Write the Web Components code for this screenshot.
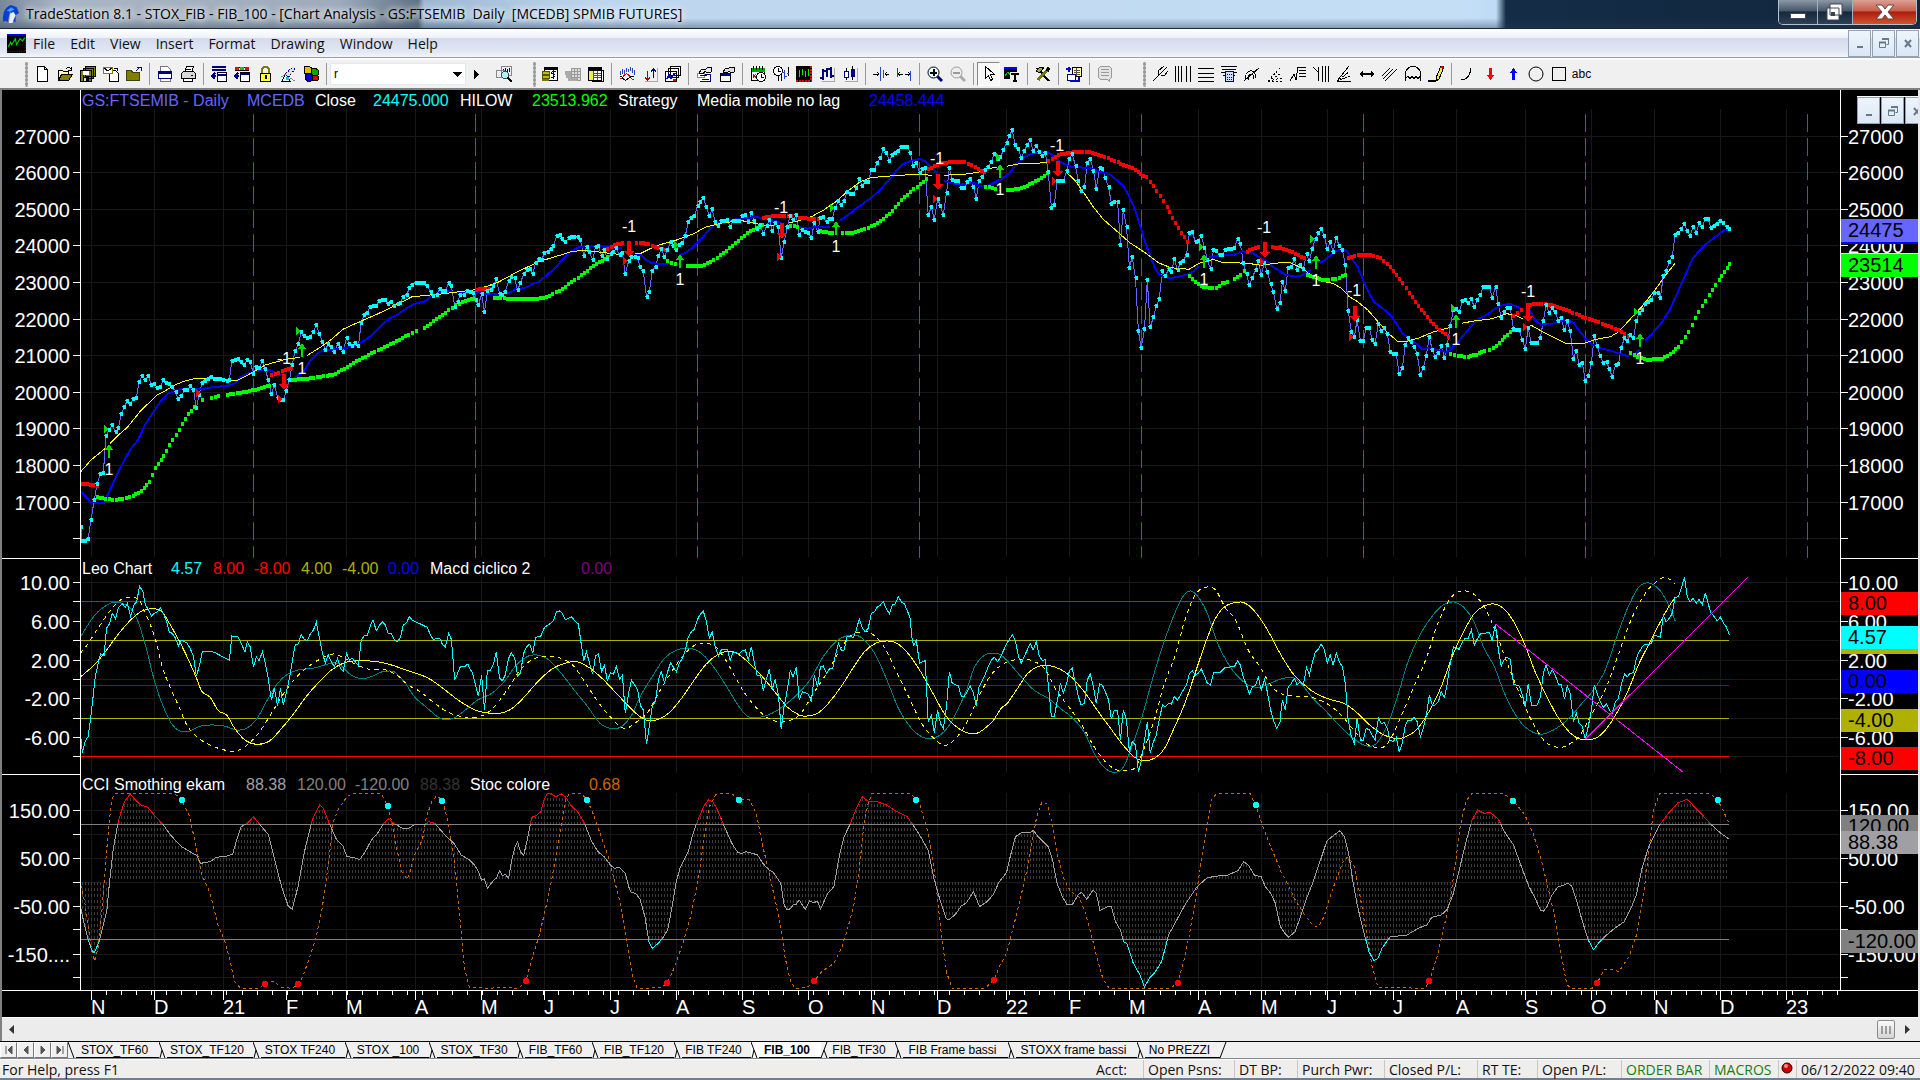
<!DOCTYPE html>
<html lang="en">
<head>
<meta charset="utf-8">
<title>TradeStation 8.1</title>
<style>
  html, body {
    height: 100%;
    margin: 0;
    background: #000;
  }
</style>
</head>
<body>
<trade-window></trade-window>

<script>
// ---------- icons (16 x 16) ----------

const ICONS = {
  app: '<path d="M2 15C1 8 3 2 9 0l5 2 2 5-3 2v6l-3-1 1-6-3-2-2 9-2-1z" fill="#0a3fd0"/><path d="M5 5l4-3 3 2-4 2z" fill="#39a0ff"/><path d="M7 16l1-8 3-2 2 3-3 7z" fill="#e9ecff"/>',
  chart: '<rect width="16" height="16" fill="#000"/><path d="M0 .5h16" stroke="#00f" stroke-width="2"/><path d="M1 11l2-4 1 2 3-5 1 5 3-5 2 2 2-3" fill="none" stroke="#0c0"/><path d="M0 14.500h16M15.500 3v12" stroke="#900" stroke-dasharray="1 1"/>',
  page: '<path d="M3.500 .5h7l3 3v12h-10zM10.500 .5v3h3" fill="#fff" stroke="#000"/>',
  open: '<path d="M1.500 14.500v-10h4l1 1h5v3" fill="#ffffa0" stroke="#000"/><path d="M1.500 14.500l3-6h11l-4 6z" fill="#808000" stroke="#000"/><path d="M9 3c2-2 3-2 5 0M14 1v3h-3" fill="none" stroke="#000"/>',
  saveAll: '<path d="M5.500 .5h10v10h-10zM3.500 2.500h10v10h-10zM.5 4.500h11v11h-11z" fill="#808000" stroke="#000"/><path d="M3 5h6v4H3z" fill="#fff"/><path d="M3 11h6v4H3z" fill="#000"/><path d="M4 12h2v3H4z" fill="#ddd"/>',
  mail: '<path d="M6.500 4.500h6l3 3v8h-9z" fill="#fff" stroke="#000"/><path d="M.5 1.500h9v6h-9z" fill="#fff" stroke="#808000"/><path d="M1 2l4 3 4-3" fill="none" stroke="#000"/><path d="M11 2h3v3" fill="none" stroke="#000"/>',
  folder: '<path d="M.5 14.500v-10h5l1 2h7v8z" fill="#808000" stroke="#404000"/><path d="M10 5l4-4M11 1h4v4" fill="none" stroke="#000080"/>',
  pageSetup: '<path d="M3.500 .5h7l3 3v12h-10z" fill="#fff" stroke="#777"/><path d="M1.500 5.500h13v7h-13z" fill="#fff" stroke="#000080"/><path d="M1 5h14v3H1z" fill="#000080"/>',
  print: '<path d="M4.500 6.500l2-6h7l-2 6" fill="#fff" stroke="#000"/><path d="M1.500 7.500l2-2h10l2 2v5h-14z" fill="#d8d8d8" stroke="#000"/><path d="M3 12.500h9v3H3zM6 3h5M5 5h5M11 9h2" fill="#fff" stroke="#000"/>',
  insert: '<path d="M1 1h14M1 3.500h14" stroke="#000080" stroke-width="2"/><path d="M6.500 6.500h9v9h-9z" fill="#fff" stroke="#000"/><path d="M6 9h9M5 10H1M4 7l-3 3 3 3" fill="none" stroke="#000080" stroke-width="2"/>',
  insertColor: '<path d="M1 1h14M1 4h14" stroke="#000" /><path d="M1 1h4v3H1z" fill="#f00"/><path d="M6 1h4v3H6z" fill="#0c0"/><path d="M11 1h4v3h-4z" fill="#f00"/><path d="M6.500 6.500h9v9h-9z" fill="#fff" stroke="#000"/><path d="M6 8h9M5 10H1M4 7l-3 3 3 3" fill="none" stroke="#000080" stroke-width="2"/>',
  lock: '<path d="M5 8V4c0-4 7-4 7 0v4" fill="none" stroke="#808000" stroke-width="2"/><path d="M3.500 7.500h10v8h-10z" fill="#ff4" stroke="#000"/><path d="M8 9h2v4H8z" fill="#000"/>',
  satellite: '<path d="M2 15l4-8 4 8z" fill="none" stroke="#000"/><path d="M5 8l8-7 2 2-6 8z" fill="#ddd" stroke="#000080" stroke-dasharray="1 1"/><path d="M1 11l5-3M10 12l5 3" stroke="#888"/><path d="M6 11h3v3H6z" fill="#0cc"/>',
  cubes: '<path d="M1 1l4-1 4 2v5l-4 2-4-2z" fill="#e0c000" stroke="#000"/><path d="M8 3l4-1 3 2v5l-4 1-3-2z" fill="#0a0" stroke="#000"/><path d="M2 8l4-1 4 2v5l-4 2-4-3z" fill="#00c" stroke="#000"/><path d="M9 10l3-1 3 1v4l-3 1-3-1z" fill="#d00" stroke="#000"/>',
  find: '<path d="M5.500 .5h10v9h-10zM.5 4.500h8v7h-8z" fill="#eee" stroke="#888"/><path d="M7 3h1M9 2v4M11 3v3M13 2v4" stroke="#000080"/><circle cx="9" cy="9" r="3.500" fill="#a6f4f4" stroke="#446"/><path d="M11.500 11.500l4 4" stroke="#000" stroke-width="2"/>',
  account: '<path d="M2.500 1.500h13v13h-13z" fill="#fff" stroke="#000"/><path d="M2 1h14v3H2z" fill="#000"/><ellipse cx="4" cy="7" rx="4" ry="2" fill="#bb0" stroke="#550"/><ellipse cx="4" cy="11" rx="4" ry="2" fill="#bb0" stroke="#550"/><path d="M0 14h7" stroke="#770" stroke-width="2"/><path d="M14 6c-4-2-6 2-3 2s3 4-2 3M11.500 4v9" fill="none" stroke="#000080"/>',
  trackOff: '<path d="M6.500 2.500h9v12h-9zM6 5.500h10M9 3v11M12 3v11M6 8.500h10M6 11.500h10" fill="#ddd" stroke="#999"/><path d="M0 5h6v7H1zM3 12h9v3H3z" fill="#aaa"/>',
  quote: '<path d="M.5 1.500h13v13H.5zM13 4h2v11H4" fill="#fff" stroke="#000"/><path d="M1 2h12v3H1z" fill="#000"/><path d="M1 5h4v9H1z" fill="#ee5"/><path d="M5 5v9M9 5v9M6 7h7M6 9h7M6 11h7" stroke="#554"/>',
  analysis: '<path d="M1 5v4M3 3v5M5 4v4M7 2v4M9 3v3M11 1v4M13 2v5M15 4v5" stroke="#24c"/><path d="M1 13c3 0 4-6 7-5s3 5 7 6" fill="none" stroke="#d00"/><path d="M1 10c3 0 3 5 6 4s4-5 8-3" fill="none" stroke="#000"/>',
  upDown: '<path d="M5.500 5v9M3 11.500l2.500 2.500L8 11.500" fill="none" stroke="#a00"/><path d="M11.500 12V3M9 5.500L11.500 3 14 5.500" fill="none" stroke="#000080"/><path d="M3 15.500h12.500V2" fill="none" stroke="#aaa"/>',
  windows: '<path d="M5.500 .5h10v9h-10zM3.500 2.500h10v9h-10zM.5 5.500h11v10H.5z" fill="#fff" stroke="#000"/><path d="M2 13l2-4 2 3 4-5" fill="none" stroke="#00c" stroke-width="2"/><path d="M8 14h3" stroke="#c00" stroke-width="2"/>',
  handPage: '<path d="M6.500 8.500h8v7h-11" fill="#fff" stroke="#000080"/><path d="M1.500 7.500h7v4h-7z" fill="#fff" stroke="#888"/><path d="M3 7l3-4h4l2-2h3v5l-4 1-2-2-2 3z" fill="#e8e8e8" stroke="#000"/><path d="M4 9.500h7M6 13.500h7" stroke="#000080"/>',
  handBox: '<path d="M1.500 7.500h10v8h-10z" fill="#fff" stroke="#000"/><path d="M2 7h10v3H2z" fill="#000080"/><path d="M4 6l3-4h3l2-1h3v5l-3 1-2-2-2 2z" fill="#ddd" stroke="#000"/>',
  calendar: '<path d="M1.500 2.500h13v12h-13z" fill="#fff" stroke="#000"/><path d="M2 2h13v4H2z" fill="#0a0"/><path d="M3 8l3 4M6 8l-3 4" stroke="#c00"/><circle cx="11" cy="11" r="4.500" fill="#fff" stroke="#000"/><path d="M11 8v3h3M3 0v4M6 0v4M9 0v4M12 0v4" stroke="#000" fill="none"/>',
  clockBars: '<circle cx="5" cy="5" r="4.500" fill="#fff" stroke="#000"/><path d="M5 2v3h3M5 10v5M8 9v6M15 1v9" stroke="#000" fill="none"/><path d="M11 4v9M9 6h2M11 10h3M14 7h2" stroke="#24c" fill="none"/>',
  blackBars: '<rect width="16" height="16" fill="#000"/><path d="M3 4v7M6 3v6M9 5v6M12 3v7" stroke="#0e0"/><path d="M0 14.500h16M15 0v14" stroke="#e00" stroke-width="2" stroke-dasharray="2 1"/>',
  ohlc: '<path d="M4 3v11M1 12h3M4 5h4M8 2v9M12 1v11M9 3h3M12 10h3" stroke="#000080" stroke-width="2"/><path d="M3 15.500h12.500V2" fill="none" stroke="#aaa"/>',
  candle: '<path d="M4.500 2v12M10.500 0v14" stroke="#000"/><path d="M2.500 5.500h4v6h-4z" fill="#fff" stroke="#000080"/><path d="M8.500 3h4v8h-4z" fill="#000080"/><path d="M3 15.500h12.500V2" fill="none" stroke="#aaa"/>',
  narrow: '<path d="M7.500 1v14M10.500 4v8" stroke="#24c"/><path d="M0 8h6M4 6l2 2-2 2M16 8h-4M14 6l-2 2 2 2" fill="none" stroke="#000"/>',
  widen: '<path d="M1.500 2v9M14.500 5v10" stroke="#24c"/><path d="M2 8h5M4 6L2 8l2 2M14 8H9M12 6l2 2-2 2" fill="none" stroke="#000"/>',
  zoomIn: '<g shape-rendering="auto"><path d="M10 10l5 5" stroke="#000080" stroke-width="3"/><circle cx="6.500" cy="6.500" r="5.500" fill="#e0ffff" stroke="#000"/></g><path d="M3 6.500h7M6.500 3v7" stroke="#000" stroke-width="2"/>',
  zoomOut: '<g shape-rendering="auto"><path d="M10 10l5 5" stroke="#aaa" stroke-width="3"/><circle cx="6.500" cy="6.500" r="5.500" fill="#eee" stroke="#999"/></g><path d="M3 6.500h7" stroke="#999" stroke-width="2"/>',
  pointer: '<path d="M4.500 .5v12l3-3 2 5 2-1-2-5h4z" fill="#fff" stroke="#000"/>',
  chartText: '<path d="M0 1h13v12H0z" fill="#000"/><path d="M0 2h13" stroke="#00f" stroke-width="2"/><path d="M1 10l3-4 2 3 3-3 3 1" fill="none" stroke="#0c0"/><path d="M6 6h10v10H6z" fill="#efefef"/><path d="M7 8h8M11 7v8M9 15h4" stroke="#000" stroke-width="2"/>',
  tools: '<path d="M2 2l12 13" stroke="#000" stroke-width="2"/><path d="M14 2L3 14" stroke="#770" stroke-width="3"/><path d="M1 5l4-4h4L5 7z" fill="#aa3" stroke="#000"/><path d="M12 1l3 1-1 4-3-1z" fill="#000"/>',
  addReport: '<path d="M6.500 1.500h9v9h-9z" fill="#ffa" stroke="#000"/><path d="M8 4h6M8 6h6M8 8h6M10 2v8" stroke="#553"/><path d="M1.500 8.500h8v6h-8z" fill="#fff" stroke="#000080"/><path d="M4 15h9v-4M0 3h5M2.500 1v5" fill="none" stroke="#00c" stroke-width="2"/>',
  note: '<path d="M3.500 .5h9l2 2v9l-2 2v2l-2-2h-7l-2-2v-9z" fill="#e4e4e4" stroke="#999"/><path d="M4 3.500h8M4 6.500h8M4 9.500h8" stroke="#999"/>',
  pitchfork: '<path d="M1 15l9-9M6 10L6 5l6-5M9 9h4l3-4M8 8l7-7" fill="none" stroke="#000"/>',
  vLines: '<path d="M.5 0v16M3.500 0v16M6.500 0v16M11.500 0v16M15.500 0v16" stroke="#000"/>',
  hLines: '<path d="M0 2.500h16M0 7.500h16M0 11.500h16M0 15.500h16" stroke="#000"/>',
  calc: '<path d="M0 .5h16M1 3.500h14M0 6.500h16M2 9.500h12" stroke="#000"/><path d="M4.500 5.500h8v10h-8z" fill="#cdf" stroke="#008"/><path d="M6 8h5M6 11h5M6 13.500h5" stroke="#008" stroke-dasharray="1 1"/>',
  arcs: '<path d="M1 14c0-12 11-12 11-2M4 14c0-8 6-7 6-1M0 15L15 2" fill="none" stroke="#000"/>',
  fanDots: '<path d="M1 15.500h14M1 15L14 1M1 15l14-8M1 15l14-3" stroke="#000" stroke-dasharray="2 2" fill="none"/>',
  retrace: '<path d="M0 15l4-7 2 6 2-13M8 1.500h8M9 4.500h7M9 7.500h7M9 10.500h7" fill="none" stroke="#000"/>',
  timeZones: '<path d="M0 1l5 5V1M5 4v11M9.500 0v16M12.500 0v16M15.500 0v16" fill="none" stroke="#000"/>',
  fan: '<path d="M1 15L13 0M1 15h14" stroke="#000"/><path d="M1 15l12-9M1 15l14-5" stroke="#000" stroke-dasharray="2 1"/>',
  hArrow: '<path d="M2 7h12v2H2z"/><path d="M0 8l4-3v6zM16 8l-4-3v6z"/>',
  parallel: '<path d="M1 13L11 3M3 15L15 3M0 10l8-8" stroke="#000"/>',
  cycle: '<path d="M.5 15V8c0-10 15-10 15 0v7M1 12l2-2 2 3 2-3 2 3 2-3 2 3 2-3" fill="none" stroke="#000"/>',
  pencil: '<path d="M8 12l5-12 3 1-5 12-3 2z" fill="#ee4" stroke="#000"/><path d="M13 0l3 1-1 2-3-1z" fill="#b00"/><path d="M0 15h8" stroke="#000" stroke-width="2"/>',
  curve: '<path d="M2 14c5 0 9-4 10-12" fill="none" stroke="#000"/>',
  downArrow: '<path d="M7 2h3v7h2l-3.500 5L5 9h2z" fill="#f00"/>',
  upArrow: '<path d="M7 14h3V7h2L8.500 2 5 7h2z" fill="#00f"/>',
  ellipse: '<circle cx="8" cy="8" r="7" fill="none" stroke="#000" shape-rendering="auto"/>',
  rect: '<path d="M1.500 1.500h13v13h-13z" fill="none" stroke="#000"/>'
};

const icon = (name, size = 16) =>
  `<svg width="${size}" height="${size}" viewBox="0 0 16 16" aria-hidden="true">${ICONS[name]}</svg>`;

// ---------- plot data ----------
// Traces are digitised on sheets 640px wide with 2.45 x 3 units per pixel.
// "@n" starts the sheet at x = n, "|" lifts the pen.

const UX = 2.45;
const UY = 3;

function parseTrace(text, top) {
  const runs = [[]];
  let sheet = 0;
  text.trim().split(/\s+/).forEach(token => {
    if (token[0] === '@') {
      sheet = Number(token.slice(1));
    } else if (token === '|') {
      runs.push([]);
    } else {
      const [x, y] = token.split(',').map(Number);
      runs[runs.length - 1].push([sheet + x / UX, top + y / UY]);
    }
  });
  return runs.filter(run => run.length);
}

const n1 = v => Math.round(v * 10) / 10;

function linePath(runs) {
  return runs.map(run => 'M' + run.map(p => n1(p[0]) + ' ' + n1(p[1])).join('L')).join('');
}

function smoothPath(runs) {
  return runs.map(run => {
    let d = `M${n1(run[0][0])} ${n1(run[0][1])}`;
    for (let i = 0; i < run.length - 1; i++) {
      const a = run[i - 1] || run[i];
      const b = run[i];
      const c = run[i + 1];
      const e = run[i + 2] || c;
      d += `C${n1(b[0] + (c[0] - a[0]) / 6)} ${n1(b[1] + (c[1] - a[1]) / 6)} ${n1(c[0] - (e[0] - b[0]) / 6)} ${n1(c[1] - (e[1] - b[1]) / 6)} ${n1(c[0])} ${n1(c[1])}`;
    }
    return d;
  }).join('');
}

// one 3 x 4 mark per bar, a bar is 3px wide; shape is drawn from the mark's corner
function barDots(runs, shape = 'h3v4h-3z') {
  let d = '';
  const put = (x, y) => {
    d += `M${Math.round(x - 1)} ${Math.round(y - 2)}${shape}`;
  };
  runs.forEach(run => {
    put(run[0][0], run[0][1]);
    for (let i = 1; i < run.length; i++) {
      const [x0, y0] = run[i - 1];
      const [x1, y1] = run[i];
      const steps = Math.max(1, Math.round((x1 - x0) / 3));
      for (let s = 1; s <= steps; s++) {
        put(x0 + (x1 - x0) * s / steps, y0 + (y1 - y0) * s / steps);
      }
    }
  });
  return d;
}

const PRICE = {
  close: `198,1220 201,1262 209,1262 216,1256 223,1199 231,1139 238,1091 246,1061 253,1059 260,947 267,930 275,914 283,936 290,924 297,881 305,860 312,842 319,852 327,836 334,833 341,785 349,767 356,779 363,767 371,795 378,792 385,803 393,801 400,779 407,788 415,791 422,800 430,815 437,838 444,828 452,810 459,810 466,797 474,810 481,864 488,824 495,788 503,782 517,770 524,776 532,776 547,780 555,783 562,780 568,722 583,716 591,725 598,736 606,719 613,725 621,762 628,740 635,745 643,724 650,748 657,779 665,821 672,794 680,833 687,840 694,840 701,814 709,780 716,735 723,692 731,672 738,636 745,648 753,654 760,650 768,636 775,614 782,642 790,665 797,690 804,672 812,680 819,697 827,671 834,684 841,695 849,653 856,672 863,678 870,669 878,678 885,608 892,586 900,578 907,560 920,558 929,542 944,540 951,552 959,546 966,558 974,552 981,548 988,530 996,526 1003,504 1010,495 1018,490 1040,488 1047,497 1055,515 1062,527 1070,524 1077,506 1084,514 1091,514 1099,488 1106,497 1114,560 1121,545 1128,524 1136,524 1143,513 1151,515 1158,520 1165,540 1172,555 1180,522 1187,576 1194,513 1202,511 1209,499 1216,478 1224,522 1231,526 1238,515 1246,484 1253,472 1261,475 1268,510 1275,489 1283,462 1290,450 1298,447 1305,463 1312,428 1320,416 1327,420 1334,398 1342,396 1349,387 1356,378 1364,347 1371,345 1378,357 1385,366 1393,354 1400,352 1415,351 1422,360 1430,407 1437,381 1444,396 1452,420 1459,380 1466,378 1474,407 1481,390 1488,418 1496,401 1503,396 1510,384 1518,405 1525,399 1532,462 1540,424 1547,410 1555,412 1562,415
    @640 0,440 8,453 16,530 23,516 30,453 38,440 45,407 52,386 60,411 67,390 75,365 82,378 89,390 96,374 104,369 111,348 118,306 126,293 133,288 141,257 148,245 155,234 162,260 170,288 177,267 184,305 192,318 199,302 207,303 214,300 221,320 228,302 243,302 251,288 258,286 265,305 273,279 280,302 287,326 295,314 302,342 310,318 317,299 324,333 331,308 339,320 346,414 353,366 361,320 368,288 375,299 383,285 390,344 398,330 405,336 412,339 420,353 427,309 435,336 442,294 449,292 457,306 464,297 471,297 478,264 486,242 493,254 500,242 508,215 515,222 523,222 530,204 537,177 545,197 552,186 559,185 567,150 574,150 581,128 589,114 596,86 603,98 611,122 618,105 625,100 633,93 640,80 655,80 662,98 670,138 677,128 685,160 692,146 699,144 706,285 714,261 721,299 729,237 736,258 743,285 751,219 758,144 765,179 780,184 787,203 795,204 802,186 809,177 817,201 824,236 831,184 839,170 846,150 853,140 861,125 868,101 876,118 883,112 898,68 905,47 912,30 919,75 927,87 934,113 942,92 949,75 956,60 963,93 971,77 978,95 986,107 993,98 1000,155 1008,263 1015,255 1022,183 1037,183 1045,154 1052,117 1059,101 1067,138 1074,182 1081,213 1089,201 1096,128 1103,117 1111,152 1118,206 1126,143 1133,147 1140,174 1148,201 1155,251 1162,246 1170,245 1177,374 1184,270 1192,321 1199,443 1206,411 1214,474 1221,632 1228,684 1236,627 1243,480 1250,621 1258,591 1265,558 1272,537 1280,453 1287,468 1295,448 1302,456 1309,416 1317,450 1324,430 1331,422 1339,404 1346,340 1353,336 1361,366 1368,363 1375,348 1383,383 1390,420 1398,447 1405,389 1412,393 1420,405 1427,404 1434,389 1456,384 1464,356 1471,371 1478,429 1486,462 1493,495 1500,474 1508,449 1515,423 1522,464 1530,430 1537,456 1545,491 1552,516 1560,566
    @1280 0,550 6,486 13,512 20,444 28,440 35,418 42,450 50,436 57,447 65,402 72,423 79,387 87,356 94,340 101,327 108,347 116,386 123,366 130,395 138,353 145,377 153,389 160,435 167,573 175,635 182,651 189,600 197,662 204,662 211,625 219,624 226,659 233,672 241,611 248,632 256,624 263,641 270,695 278,702 285,702 292,762 300,744 307,676 314,654 322,667 329,680 336,701 344,764 351,744 358,708 366,651 373,690 380,711 388,699 395,677 403,713 410,675 417,618 425,570 432,566 439,576 447,544 454,540 461,549 469,537 476,561 483,540 491,525 498,500 513,500 520,534 528,500 535,552 542,593 550,576 557,564 564,564 572,627 586,630 594,660 601,686 608,624 616,670 630,668 638,654 645,603 652,555 660,580 667,563 674,576 682,602 689,594 697,630 704,603 711,633 719,716 726,692 733,735 741,729 748,782 755,768 763,729 770,648 777,677 785,708 792,729 800,726 807,746 814,771 822,735 829,732 836,684 844,654 851,662 858,645 866,654 873,603 880,578 888,570 895,552 902,545 910,540 917,519 927,519 932,534 939,467 946,452 954,426 961,411 968,345 976,340 983,327 991,312 998,333 1005,347 1012,320 1020,338 1027,309 1035,320 1042,296 1049,297 1056,323 1064,318 1071,312 1079,302 1086,308 1094,320 1101,327`,
  average: `198,1114 212,1132 220,1146 235,1148 255,1148 262,1130 275,1095 290,1055 305,1020 320,988 338,960 355,915 375,878 395,842 412,820 425,815 440,808 465,805 495,807 510,804 530,800 560,798 575,790 590,772 605,762 621,756 640,750 660,750 680,762 690,765 | 718,780 728,768 745,752 760,722 778,700 790,692 812,690 830,686 855,682 870,676 887,666 900,656 918,638 940,610 955,595 975,584 990,570 1005,558 1020,550 1040,545 1055,530 1075,520 1100,513 1120,517 1145,514 1170,520 1200,522 1245,520 1262,508 1285,505 1305,492 1320,486 1335,470 1355,450 1370,430 1385,410 1400,394 1418,382 1440,378 1470,379 1500,383 1525,385 | 1555,400 1568,402
    @640 0,402 15,420 30,430 50,432 75,430 85,425 | 96,405 110,400 125,386 140,370 155,350 170,328 185,313 200,306 225,300 255,295 285,291 300,295 330,303 345,308 | 372,312 385,320 400,324 430,322 465,322 | 488,303 510,285 530,265 550,248 570,230 590,207 610,180 630,150 645,132 665,122 685,117 700,124 715,144 728,160 | 745,184 765,190 785,194 800,190 815,188 830,197 850,198 865,190 885,178 905,160 920,134 940,112 960,101 985,97 1000,96 1010,106 1025,122 1045,135 1060,141 1105,144 1125,155 1150,162 1170,182 1185,200 1200,232 1215,275 1228,328 1240,375 1252,412 1262,445 1270,460 1280,470 1300,474 1320,470 1345,462 1358,452 1370,437 | 1395,410 1405,410 1425,405 1455,404 1475,394 1495,396 1515,410 1535,423 1550,440 1568,453
    @1280 0,455 15,465 40,470 55,466 75,450 | 98,430 110,420 125,405 140,392 155,388 165,395 175,414 190,440 205,485 218,520 232,548 250,563 270,585 285,610 300,640 320,660 335,672 348,687 370,684 390,692 410,696 425,680 440,660 455,638 472,612 490,594 510,582 530,563 550,554 565,551 580,560 592,566 | 612,572 628,605 640,615 665,612 685,604 705,600 720,610 735,635 750,658 765,673 785,684 810,692 830,700 850,708 870,702 880,690 | 895,663 915,636 935,608 955,570 975,515 995,460 1010,418 1030,388 1050,366 1068,350 1085,333 1101,327`,
  noLag: `198,1055 223,1020 257,986 | 270,970 290,945 312,922 345,872 385,825 405,812 430,794 455,782 480,775 520,776 560,779 580,782 600,770 621,755 650,735 700,718 735,712 | 753,706 785,682 810,660 840,628 885,603 925,582 970,555 1010,530 1080,522 1160,510 1190,500 1220,487 1270,454 1320,425 1360,410 1400,395 1430,391 1460,395 1525,404 | 1555,400 1568,401
    @640 0,401 40,377 85,362 130,342 160,322 200,309 250,302 275,308 300,315 328,316 | 365,308 390,302 420,290 450,270 480,245 510,212 540,185 565,173 620,167 680,163 715,166 | 745,166 800,162 835,155 | 846,147 875,142 | 898,139 925,132 970,130 1005,127 | 1043,155 1065,180 1090,223 1110,260 1135,298 1165,330 1200,368 1240,400 1270,428 1300,443 1345,448 1370,430 1405,418 1425,427 1490,430 1520,436 1568,428
    @1280 0,427 25,428 55,445 80,470 95,482 | 112,486 130,490 150,505 170,530 190,545 215,570 240,605 265,640 290,666 310,664 340,654 375,636 415,623 | 445,610 475,603 520,596 555,581 575,585 595,597 | 614,615 650,640 700,670 745,670 775,658 810,650 830,635 860,595 890,555 920,508 945,465 968,430`,
  low: `238,1130 250,1135 275,1139 300,1138 325,1129 345,1112 365,1085 380,1045 400,1008 415,975 430,945 445,912 460,883 475,862 | 495,840 | 517,833 535,827 | 555,825 580,819 610,813 640,804 660,797 | 716,780 760,775 800,768 820,762 850,740 880,719 910,700 940,682 970,664 1000,644 1018,632 | 1040,624 1062,604 1090,578 1115,556 1140,542 1160,536 | 1210,533 1250,537 1315,537 1345,528 1370,512 1400,487 1430,458 1460,432 1488,412
    | @640 67,424 85,432 | 115,438 150,438 180,420 210,392 240,362 270,333 298,315 | 368,317 385,320 | 442,333 470,339 | 496,339 520,339 550,328 580,310 610,282 640,240 670,207 700,177 | 846,200 870,207 | 898,211 905,211 940,202 975,180 998,160 | 1346,468 1360,486 1380,502 1410,503 1425,490 1437,485 | 1456,477 1470,464 1480,454
    | @1280 65,465 90,474 110,481 135,477 160,464 | 417,702 435,708 460,711 480,704 500,693 | 513,690 530,677 550,652 570,630 | 858,700 875,712 900,719 935,717 955,703 975,680 1000,635 1025,575 1050,525 1075,480 1101,432`,
  high: `198,1091 220,1094 238,1098 | 665,765 690,754 712,745 | 1165,509 1205,506 | 1488,387 1505,375 1525,370 | 1558,368 1568,369
    @640 0,369 20,373 45,385 62,390 | 302,293 330,287 370,287 | 390,293 435,298 | 706,148 735,130 765,125 795,127 820,141 842,157 | 1000,122 1025,105 1060,96 1100,96 1130,107 1170,127 1205,145 1240,172 1265,213 1290,260 1310,310 1339,366 | 1486,396 1500,386 1515,380 | 1548,382 1568,384
    @1280 0,382 30,397 60,414 | 167,413 190,405 220,404 245,415 270,440 300,490 330,545 360,592 390,630 412,650 | 572,588 590,571 | 606,555 640,551 665,555 700,570 740,590 780,607 820,626 852,647`,
  sells: '695,762 1540,363 @640 347,308 730,162 1023,122 1531,366 @1280 183,558 608,558',
  buys: '268,975 739,672 @640 97,405 479,306 883,135 1383,405 @1280 88,408 432,585 881,642',
  buyMarks: '260,928 730,634 @640 88,374 470,263 877,110 1375,381 @1280 78,356 425,565 873,577',
  sellMarks: '484,818 687,838 1532,422 @640 340,412 722,236 1015,182 1524,427 @1280 174,650 600,622',
  longTags: '267,1047 740,744 @640 97,478 479,378 883,208 1383,478 @1280 88,480 432,657 881,714',
  shortTags: '695,715 1540,317 @640 345,262 727,115 1022,76 1530,320 @1280 182,511 608,514'
};

const LEO = {
  leo: `198,560 202,608 209,572 216,560 223,495 228,440 234,375 238,355 246,312 255,316 261,235 268,222 275,190 283,206 290,172 300,162 307,172 312,160 320,200 328,165 335,155 342,108 350,125 356,165 364,180 371,198 378,190 386,185 393,173 400,190 407,210 415,246 422,250 430,265 437,287 444,270 459,280 466,296 474,318 481,378 488,350 496,303 517,303 530,310 548,322 562,330 568,258 583,260 591,280 600,306 606,275 613,290 621,352 628,320 635,332 643,305 650,340 657,385 665,450 672,415 680,467 687,415 694,465 701,430 709,385 716,335 723,285 731,282 738,253 745,268 753,272 760,252 768,240 775,216 782,262 790,310 797,338 804,315 812,335 819,350 827,325 834,355 841,363 849,310 856,330 863,325 870,335 878,347 885,270 892,258 900,256 907,228 914,210 922,242 930,225 937,216 944,225 951,250 959,250 966,270 974,275 981,262 988,225 996,218 1003,200 1010,210 1040,228 1047,232 1055,256 1062,270 1070,265 1077,265 1084,283 1091,290 1099,250 1106,268 1114,390 1121,370 1128,350 1138,350 1146,342 1151,355 1158,370 1165,406 1172,438 1180,375 1187,480 1194,362 1202,360 1209,342 1216,305 1224,385 1231,392 1238,375 1246,325 1253,308 1261,325 1268,378 1275,370 1283,310 1290,290 1298,282 1305,310 1312,262 1325,258 1334,232 1349,220 1356,212 1364,184 1371,183 1378,190 1385,210 1400,200 1410,215 1417,222 1422,265 1430,332 1437,305 1444,338 1452,372 1459,318 1466,312 1474,365 1481,345 1488,392 1496,368 1503,372 1510,348 1518,388 1525,376 1532,490 1540,430 1547,390 1555,405 1562,420 1568,460
    @640 0,465 8,480 16,582 23,528 30,470 38,452 45,390 52,365 60,398 67,368 75,338 89,365 96,340 104,325 111,300 118,262 126,245 133,238 141,208 148,192 155,184 162,210 170,265 177,245 184,290 192,318 199,300 214,298 221,332 228,305 243,312 251,302 258,300 265,330 273,290 280,338 287,375 295,375 302,422 310,385 317,358 324,418 331,388 339,435 346,536 353,470 361,420 368,362 375,380 383,350 390,450 398,425 412,432 420,455 427,375 435,412 442,350 449,348 457,370 464,355 472,355 478,320 486,280 493,300 500,300 508,258 523,262 530,240 537,207 545,235 552,245 559,235 567,190 574,186 581,172 589,165 596,155 603,175 611,192 618,165 625,162 633,140 640,155 648,162 655,182 662,205 666,262 670,286 677,272 685,340 692,335 699,332 706,515 714,495 721,548 729,480 736,520 743,536 751,470 758,365 765,400 780,408 787,438 795,438 802,425 809,408 817,430 824,468 831,408 839,392 846,372 853,350 861,330 868,322 876,335 883,322 898,282 905,268 912,254 919,270 927,318 934,340 942,318 956,280 963,300 971,275 978,318 986,332 993,328 1000,400 1008,500 1015,500 1022,455 1030,400 1037,430 1045,402 1052,362 1059,355 1067,400 1074,440 1081,465 1089,460 1096,390 1103,372 1111,410 1118,460 1126,402 1133,405 1140,425 1148,450 1155,508 1162,480 1170,480 1177,570 1184,480 1192,510 1199,605 1206,575 1214,585 1221,665 1228,635 1236,570 1243,515 1250,608 1258,575 1265,555 1272,510 1280,465 1287,470 1295,460 1302,462 1309,440 1317,450 1324,435 1331,420 1339,405 1346,370 1353,362 1361,375 1368,370 1375,356 1383,378 1390,400 1398,405 1405,368 1420,368 1434,352 1456,350 1464,332 1471,345 1478,382 1486,405 1493,432 1500,412 1508,405 1515,382 1522,420 1530,390 1537,425 1545,480 1552,512 1560,535 1568,515
    @1280 0,505 6,450 13,480 20,410 28,400 35,385 42,405 50,395 57,405 65,352 72,375 79,340 87,305 94,298 101,282 108,298 116,338 123,315 130,345 138,308 145,335 153,350 160,400 167,510 175,560 182,580 189,505 197,570 204,570 211,535 219,540 226,555 233,570 241,505 248,520 256,518 263,535 270,572 278,574 285,562 292,605 300,580 307,525 314,510 322,510 329,502 336,515 344,560 351,535 358,500 366,435 373,465 380,465 388,455 395,425 403,442 410,400 417,340 425,290 439,298 447,275 454,265 461,265 469,240 476,285 483,268 491,252 498,250 513,248 520,270 528,222 535,300 542,348 550,328 557,322 564,328 572,402 586,408 594,435 601,470 608,402 616,465 630,465 638,440 645,370 652,345 660,375 667,358 674,375 682,402 689,402 697,448 704,408 711,430 719,515 726,490 733,520 741,530 748,568 755,530 763,480 770,405 777,430 785,455 792,472 800,462 807,480 814,490 822,455 829,445 836,405 844,372 851,380 858,370 866,368 873,325 880,305 888,290 895,282 902,285 910,280 917,255 932,262 939,195 946,215 954,205 961,190 968,142 976,140 983,115 991,82 998,140 1005,155 1012,145 1020,160 1027,148 1035,165 1042,128 1049,162 1056,188 1064,200 1071,212 1079,202 1086,218 1094,232 1101,255`,
  slow: `198,380 215,362 235,340 260,302 290,252 320,210 345,185 370,176 395,184 415,220 440,275 460,325 480,380 495,425 515,442 535,482 555,495 575,535 600,570 630,583 660,573 690,535 720,490 750,440 780,398 810,362 840,340 870,332 900,332 945,340 990,358 1045,382 1080,410 1120,448 1160,478 1190,488 1225,490 1255,475 1285,440 1320,392 1355,355 1385,340 1410,334 1440,350 1475,385 1510,430 1545,475
    @640 0,500 20,512 45,508 70,490 100,448 130,395 160,345 190,314 215,304 240,312 270,342 300,380 330,425 360,470 390,495 410,498 435,490 460,462 490,415 520,358 550,305 580,278 607,273 630,280 660,315 690,370 720,435 745,490 770,525 800,548 825,550 845,535 865,512 885,475 900,460 925,415 950,370 975,350 1000,346 1030,358 1060,385 1090,428 1120,480 1150,530 1180,580 1210,620 1230,632 1260,625 1285,595 1310,530 1335,460 1360,370 1385,280 1410,205 1435,168 1470,156 1490,165 1510,190 1530,225 1550,268
    @1280 0,310 30,368 60,405 90,432 120,447 160,462 190,490 220,525 250,552 280,565 305,562 335,538 365,485 395,410 425,310 450,245 475,192 500,168 525,162 550,178 575,220 600,285 625,365 650,430 680,500 710,548 735,567 765,568 790,550 820,500 850,430 880,340 905,280 930,220 950,175 968,142`,
  fast: `198,308 215,282 240,235 270,182 295,150 318,142 340,150 360,200 380,265 400,360 420,420 440,475 460,530 490,568 520,588 550,600 575,604 600,590 630,555 660,500 690,440 720,390 750,355 780,330 815,312 845,325 875,345 905,358 945,360 975,378 1000,405 1030,425 1060,455 1100,488 1145,502 1185,495 1215,465 1245,415 1275,360 1305,328 1340,318 1375,325 1405,348 1435,400 1465,455 1495,500 1530,535
    @640 0,508 20,485 45,430 75,370 105,318 135,285 160,280 185,290 210,330 235,385 260,435 290,480 315,505 350,516 390,495 425,430 460,365 490,300 515,258 550,245 575,258 600,295 630,370 660,445 690,520 720,565 745,586 770,570 800,520 830,440 860,375 895,338 930,328 960,332 990,355 1020,420 1050,470 1080,520 1110,585 1140,635 1165,658 1190,662 1215,650 1240,580 1260,510 1285,400 1310,320 1335,210 1360,135 1385,112 1410,120 1435,175 1460,212 1490,300 1520,352 1545,405
    @1280 0,430 30,438 65,440 90,447 120,465 150,495 180,540 210,580 235,592 255,590 275,558 300,490 330,405 360,320 385,225 410,160 430,130 455,123 480,138 505,180 530,250 560,350 595,455 620,520 650,575 680,592 705,585 735,555 765,490 800,410 830,310 860,210 885,150 910,108 940,82 955,88 968,102`,
  cycle: `198,260 215,225 240,185 270,160 290,157 315,170 335,205 355,280 380,400 400,470 420,520 440,543 465,543 495,527 545,527 580,540 605,535 630,505 655,450 680,400 705,372 730,360 770,354 810,340 830,342 860,375 885,386 910,380 935,366 965,365 990,395 1015,440 1035,462 1060,488 1080,506 1110,505 1140,480 1170,450 1205,430 1235,395 1265,345 1295,318 1320,316 1345,330 1375,370 1410,425 1440,470 1470,520 1500,536 1525,528 1550,490
    @640 0,440 30,380 60,325 90,300 120,295 145,305 175,342 210,405 240,465 265,500 300,500 335,482 375,445 415,392 450,318 485,270 520,255 545,265 575,310 605,390 635,480 665,535 690,560 715,566 745,545 770,500 800,420 820,350 845,315 870,310 890,320 930,375 965,420 1000,445 1030,475 1065,510 1090,550 1115,615 1140,655 1165,667 1185,650 1205,590 1230,500 1255,390 1280,290 1305,205 1330,140 1350,123 1370,145 1390,190 1415,280 1440,340 1465,380 1490,405 1515,412 1540,402
    @1280 0,388 30,382 55,405 80,445 110,480 140,520 170,555 205,585 235,582 265,520 290,430 315,330 345,250 375,195 400,165 425,156 450,172 475,215 500,295 525,350 550,430 575,490 600,530 635,553 670,540 705,508 740,460 765,425 795,365 825,260 855,165 880,110 905,99 930,120 950,160 968,212`,
  trend: '@1280 528,222 988,667 | 748,568 1146,82'
};

const CCI = {
  cci: `198,1075 205,1115 215,1165 225,1200 231,1208 243,1175 253,1125 262,1080 268,1000 277,900 290,812 305,755 319,731 330,748 345,765 362,772 380,798 400,825 420,858 445,890 465,905 481,915 492,940 515,935 530,922 555,919 570,912 580,870 591,830 606,820 621,800 640,828 658,855 672,925 690,1010 706,1068 716,1078 730,1010 745,910 765,810 775,785 783,765 792,775 805,815 825,870 840,888 850,920 865,922 881,929 895,905 910,870 925,850 940,820 951,806 965,820 985,834 1000,836 1015,824 1040,824 1050,815 1065,820 1090,855 1112,880 1130,915 1150,930 1162,944 1172,965 1180,990 1187,987 1194,1015 1210,990 1216,985 1224,962 1231,978 1238,973 1246,985 1253,935 1262,890 1268,875 1275,905 1283,915 1292,870 1303,802 1313,797 1325,785 1333,750 1341,731 1350,731 1362,741 1375,731 1385,740 1400,768 1415,785 1430,815 1450,875 1465,905 1480,920 1496,946 1505,955 1518,952 1532,970 1540,1010 1547,1028 1557,1030 1568,1047
    @640 0,1047 12,1100 22,1175 30,1195 45,1180 58,1160 68,1138 78,1075 88,1000 98,955 118,905 130,850 145,800 158,765 168,749 178,755 188,775 205,825 225,880 240,908 250,910 260,905 275,910 288,915 300,938 315,960 325,965 335,982 345,1000 353,1065 361,1080 370,1075 376,1062 383,1062 390,1050 398,1065 405,1078 415,1053 425,1058 435,1054 442,1078 460,1030 475,1010 488,920 500,860 515,822 530,775 545,740 560,755 580,755 605,765 625,782 655,800 680,845 706,900 720,985 735,1050 750,1105 757,1110 775,1090 787,1068 800,1058 817,1025 832,1070 850,1055 865,1035 880,995 898,968 908,915 920,860 935,848 955,848 964,841 975,860 1000,890 1010,925 1022,1000 1035,1040 1045,1062 1060,1062 1075,1032 1082,1027 1095,1048 1110,1020 1118,1030 1127,1082 1145,1070 1155,1070 1165,1115 1177,1140 1185,1175 1193,1180 1208,1238 1225,1275 1236,1311 1248,1285 1260,1270 1278,1235 1295,1155 1315,1110 1335,1065 1365,1010 1390,983 1415,978 1440,975 1465,962 1479,935 1490,945 1505,975 1522,980 1532,1010 1545,1030 1556,1058 1568,1125
    @1280 0,1128 12,1150 21,1162 37,1145 50,1100 65,1045 80,1000 95,945 115,873 130,857 147,842 158,860 168,910 178,990 190,1070 205,1145 218,1205 230,1232 240,1225 250,1195 270,1160 310,1156 340,1134 360,1125 372,1102 395,1095 410,1078 425,1030 440,955 455,880 470,812 484,780 500,790 515,787 535,808 550,845 572,885 590,945 610,1010 625,1045 638,1080 645,1084 655,1068 665,1038 680,1012 695,1005 705,1000 715,1008 725,1045 740,1110 755,1170 768,1199 780,1180 800,1155 820,1135 843,1115 860,1075 873,1035 888,950 905,885 930,825 950,792 975,758 998,748 1015,770 1035,795 1055,822 1080,850 1101,868`,
  stoc: `198,1005 208,1060 216,1130 225,1205 232,1232 240,1195 250,1080 260,920 268,810 275,745 283,731 428,731 445,749 465,800 480,890 495,975 515,1030 535,1130 550,1170 562,1225 575,1295 590,1315 635,1315 650,1301 668,1294 690,1312 715,1315 735,1300 755,1235 775,1160 790,1070 805,940 815,820 830,775 850,740 862,731 935,731 950,770 960,815 970,885 985,965 997,988 1005,965 1015,915 1035,870 1045,800 1058,755 1070,737 1084,752 1095,800 1108,885 1118,985 1130,1150 1138,1255 1150,1312 1200,1315 1225,1312 1270,1315 1289,1293 1300,1240 1320,1160 1335,1085 1350,1000 1362,920 1375,830 1385,750 1395,731 1425,731 1437,749 1450,780 1470,850 1490,920 1505,990 1520,1060 1535,1170 1548,1270 1560,1312
    @640 0,1315 50,1313 67,1299 85,1250 105,1180 125,1095 143,985 158,855 170,770 185,735 200,731 225,731 243,749 268,749 285,790 300,885 315,960 330,1045 345,1130 355,1220 368,1290 380,1315 410,1312 427,1293 445,1265 475,1240 495,1190 510,1130 525,1060 537,960 548,830 558,765 568,731 665,731 685,762 705,845 722,970 740,1170 752,1270 765,1315 845,1315 868,1290 880,1250 898,1210 915,1130 935,1030 948,960 960,880 972,800 985,755 998,762 1010,820 1022,910 1038,985 1055,1025 1075,1040 1090,1085 1105,1150 1120,1225 1135,1290 1150,1315 1300,1315 1317,1299 1332,1235 1345,1160 1360,1055 1375,935 1390,820 1400,750 1412,731 1495,731 1508,765 1525,825 1545,890 1568,955
    @1280 0,960 20,1005 35,1045 60,1095 80,1125 93,1132 108,1100 120,1050 140,980 155,935 165,922 180,940 195,1030 212,1150 225,1245 240,1312 355,1315 366,1293 385,1220 402,1130 418,1040 430,940 440,840 455,755 470,731 548,731 572,752 600,795 620,850 640,930 660,1030 675,1110 690,1220 703,1305 715,1315 765,1315 777,1298 795,1260 815,1258 830,1265 855,1220 875,1150 890,1040 902,920 915,780 930,731 1055,731 1072,749 1087,785 1101,822`,
  tops: '445,749 951,768 1084,752 1437,749 @640 243,749 677,749 1508,765 @1280 572,752 1072,749',
  bottoms: '650,1301 731,1301 1289,1293 @640 67,1299 427,1293 868,1290 1317,1299 @1280 366,1293 777,1298'
};

const MONTHS = [
  [91, 'N'], [154, 'D'], [223, '21'], [286, 'F'], [346, 'M'], [415, 'A'], [481, 'M'], [544, 'J'],
  [610, 'J'], [676, 'A'], [742, 'S'], [808, 'O'], [871, 'N'], [937, 'D'], [1006, '22'], [1069, 'F'],
  [1129, 'M'], [1198, 'A'], [1261, 'M'], [1327, 'J'], [1393, 'J'], [1456, 'A'], [1525, 'S'],
  [1591, 'O'], [1654, 'N'], [1720, 'D'], [1786, '23']
];
const CYCLES = [253, 475, 697, 919, 1141, 1363, 1585, 1807];

// plot area: x runs from the left axis to the right axis
const X0 = 81;
const X1 = 1840;
const LAST_BAR = 1729;

const hLine = (y, color, extra = '') =>
  `<path d="M${X0} ${y}.5H${LAST_BAR}" stroke="${color}" ${extra}/>`;

const PANELS = [
  {
    top: 90, bottom: 558, gridTop: 109,
    columns: '165px 68px 58px 87px 72px 86px 79px 172px auto',
    header: [['GS:FTSEMIB - Daily', '#6666ff'], ['MCEDB', '#6666ff'], ['Close', '#fff'], ['24475.000', '#0ff'],
      ['HILOW', '#fff'], ['23513.962', '#0f0'], ['Strategy', '#fff'], ['Media mobile no lag', '#fff'], ['24458.444', '#00f']],
    ticks: [[136, '27000'], [172, '26000'], [209, '25000'], [245, '24000'], [282, '23000'], [319, '22000'],
      [355, '21000'], [392, '20000'], [428, '19000'], [465, '18000'], [502, '17000'], [538, '']],
    badges: [['24475', 219, '#6666ff', 'border-bottom:2px solid #00f'], ['23514', 253, '#0f0', 'border-top:1px solid #ff0']],
    draw() {
      const t = 120;
      const close = parseTrace(PRICE.close, t);
      const marks = (text, fn) => parseTrace(text, t).flat().map(([x, y]) => fn(Math.round(x), Math.round(y))).join('');
      return CYCLES.map(x => `<path d="M${x}.5 114V558" stroke="#008080" stroke-dasharray="18 6"/>`).join('') +
        `<path d="${linePath(close)}" stroke="#6666ff"/>
        <path d="${linePath(parseTrace(PRICE.average, t))}" stroke="#00f" stroke-width="2"/>
        <path d="${linePath(parseTrace(PRICE.noLag, t))}" stroke="#ff0"/>
        <path d="${barDots(parseTrace(PRICE.low, t))}" fill="#0f0"/>
        <path d="${barDots(parseTrace(PRICE.high, t))}" fill="#f00"/>
        <path d="${barDots(close, 'h3v4h-3v-2h-1v-1h1z')}" fill="#0ff"/>` +
        marks(PRICE.sells, (x, y) => `<path d="M${x - 2} ${y}h4v10h3l-5 6-5-6h3z" fill="#f00"/>`) +
        marks(PRICE.buys, (x, y) => `<path d="M${x - 1} ${y + 13}v-8h-3l4-6 4 6h-3v8z" fill="#0d0"/>`) +
        marks(PRICE.buyMarks, (x, y) => `<path d="M${x - 2} ${y - 4}l4 4-4 4z" fill="#0d0"/>`) +
        marks(PRICE.sellMarks, (x, y) => `<path d="M${x - 2} ${y - 4}l4 4-4 4z" fill="#f00"/>`);
    },
    tags() {
      const list = (text, label) => parseTrace(text, 120).flat().map(p => [Math.round(p[0]), Math.round(p[1]), label]);
      return [...list(PRICE.longTags, '1'), ...list(PRICE.shortTags, '-1')];
    }
  },
  {
    top: 558, bottom: 774, gridTop: 577,
    columns: '89px 42px 41px 47px 41px 46px 42px 151px auto',
    header: [['Leo Chart', '#fff'], ['4.57', '#0ff'], ['8.00', '#f00'], ['-8.00', '#f00'], ['4.00', '#b0b000'],
      ['-4.00', '#b0b000'], ['0.00', '#00f'], ['Macd ciclico 2', '#fff'], ['0.00', '#800080']],
    ticks: [[582, '10.00'], [601, ''], [621, '6.00'], [640, ''], [660, '2.00'], [679, ''], [698, '-2.00'],
      [718, ''], [737, '-6.00'], [756, '']],
    badges: [['8.00', 592, '#f00'], ['4.00', 631, '#b0b000'], ['4.57', 626, '#0ff'], ['0.00', 670, '#00f'],
      ['-4.00', 709, '#b0b000'], ['-8.00', 747, '#f00']],
    draw() {
      const t = 550;
      return hLine(601, '#f00') + hLine(640, '#b0b000') + hLine(679, '#00f', 'stroke-dasharray="4 2"') +
        hLine(685, '#800080') + hLine(718, '#b0b000') + hLine(756, '#f00') +
        `<path d="${smoothPath(parseTrace(LEO.cycle, t))}" stroke="#008080"/>
        <path d="${smoothPath(parseTrace(LEO.fast, t))}" stroke="#ff0" stroke-dasharray="4 4"/>
        <path d="${smoothPath(parseTrace(LEO.slow, t))}" stroke="#ff0"/>
        <path d="${linePath(parseTrace(LEO.leo, t))}" stroke="#0ff"/>
        <path d="${linePath(parseTrace(LEO.trend, t))}" stroke="#f0f"/>`;
    }
  },
  {
    top: 774, bottom: 990, gridTop: 793,
    columns: '164px 51px 58px 65px 50px 119px auto',
    header: [['CCI Smothing ekam', '#fff'], ['88.38', '#a0a0a4'], ['120.00', '#808080'], ['-120.00', '#808080'],
      ['88.38', '#333'], ['Stoc colore', '#fff'], ['0.68', '#cc6600']],
    ticks: [[810, '150.00'], [834, ''], [858, '50.00'], [882, ''], [906, '-50.00'], [929, ''],
      [954, '-150.00', '-150....'], [977, '']],
    badges: [['120.00', 815, '#808080'], ['88.38', 831, '#a0a0a4'], ['-120.00', 930, '#808080']],
    draw() {
      const t = 550;
      const runs = parseTrace(CCI.cci, t);
      const line = linePath(runs);
      const dots = (text, color) => parseTrace(text, t).flat().map(([x, y]) =>
        `<circle cx="${Math.round(x)}" cy="${Math.round(y)}" r="3" fill="${color}"/>`).join('');
      return `<defs>
          <pattern id="hatch" width="3" height="6" patternUnits="userSpaceOnUse"><path d="M1 0h1v3h-1z" fill="#3c3c3c"/></pattern>
          <clipPath id="over"><path d="M0 700H1840V824H0z"/></clipPath>
          <clipPath id="under"><path d="M0 939H1840V1000H0z"/></clipPath>
        </defs>
        <path d="${line}V882H${X0}z" fill="url(#hatch)"/>` +
        hLine(824, '#808080') + hLine(939, '#808080') +
        `<path d="${linePath(parseTrace(CCI.stoc, t))}" stroke="#cc6600" stroke-dasharray="3 3"/>
        <path d="${line}" stroke="#a0a0a4"/>
        <path d="${line}" stroke="#f00" clip-path="url(#over)"/>
        <path d="${line}" stroke="#0ff" clip-path="url(#under)"/>` +
        dots(CCI.tops, '#0ff') + dots(CCI.bottoms, '#f00');
    }
  }
];

// ---------- elements ----------

class TitleBar extends HTMLElement {
  constructor() {
    super();
    this.attachShadow({mode: 'open'}).innerHTML = `
      <style>
        :host {
          display: flex;
          align-items: center;
          box-sizing: border-box;
          height: 29px;
          padding: 0 3px 0 1px;
          border-bottom: 1px solid #1c2733;
          background:
            linear-gradient(transparent 65%, rgba(40, 60, 85, .4)),
            linear-gradient(90deg, #77889a 0, #a9b6c4 60px, #9dabba 340px, #5f7286 418px, #9db8d2 424px, #bdd6ee 600px, #c4def6 1460px, #bfdbf5 1496px, #142c46 1506px, #10263d 100%);
          color: #000;
          font: 14px/28px "Open Sans", "Noto Sans", sans-serif;
        }
        h1 {
          flex: 1;
          margin: 0 0 0 7px;
          font: inherit;
          white-space: pre;
          text-shadow: 0 0 6px #fff, 0 0 8px #fff;
        }
        .buttons {
          display: flex;
          align-self: flex-start;
          height: 24px;
          border: 1px solid #b5c0cc;
          border-top: 0;
          border-radius: 0 0 5px 5px;
          overflow: hidden;
        }
        button {
          width: 39px;
          padding: 0;
          border: 0;
          border-right: 1px solid #a5b0bc;
          background: linear-gradient(#8c98a5, #46586b 45%, #16283a 50%, #2c4157);
        }
        button:nth-child(2) { width: 35px; }
        .close {
          width: 63px;
          border: 0;
          background: linear-gradient(#dba093, #c6604c 45%, #ab1d0b 50%, #d0532f);
        }
        svg { display: block; margin: auto; }
      </style>
      ${icon('app', 18)}
      <h1><slot></slot></h1>
      <div class="buttons">
        <button aria-label="Minimize"><svg width="20" height="20"><path d="M2.500 11.500h15v5h-15z" fill="#fff" stroke="#445"/></svg></button>
        <button aria-label="Restore"><svg width="20" height="20"><path d="M5 2h12v11H5zM2 6h12v12H2z" fill="#fff" stroke="#445"/><path d="M6 10h4v4H6z" fill="#345"/></svg></button>
        <button class="close" aria-label="Close"><svg width="20" height="20"><path d="M1 3h6l3 4 3-4h6l-6 7 6 7h-6l-3-4-3 4H1l6-7z" fill="#fff" stroke="#644"/></svg></button>
      </div>`;
  }
}

class MdiButtons extends HTMLElement {
  constructor() {
    super();
    this.attachShadow({mode: 'open'}).innerHTML = `
      <style>
        :host { display: flex; gap: 1px; height: 27px; }
        button {
          width: 23px;
          padding: 0;
          border: 1px solid #93a2b3;
          background: linear-gradient(#eef5fb, #d9e8f5);
        }
        svg { display: block; margin: auto; }
      </style>
      <button aria-label="Minimize window"><svg width="14" height="14"><path d="M4 11h6" stroke="#66788a" stroke-width="2"/></svg></button>
      <button aria-label="Restore window"><svg width="14" height="14"><path d="M5.500 3.500h6v5h-2M2.500 6.500h6v5h-6z" fill="none" stroke="#66788a"/><path d="M5 3h7M2 6.500h7" stroke="#66788a" stroke-width="2"/></svg></button>
      <button aria-label="Close window"><svg width="14" height="14"><path d="M4 4l6 7M10 4l-6 7" stroke="#66788a" stroke-width="2"/></svg></button>`;
  }
}

class MenuBar extends HTMLElement {
  constructor() {
    super();
    const items = ['File', 'Edit', 'View', 'Insert', 'Format', 'Drawing', 'Window', 'Help'];
    this.attachShadow({mode: 'open'}).innerHTML = `
      <style>
        :host {
          display: flex;
          align-items: center;
          box-sizing: border-box;
          height: 29px;
          padding: 0 1px 0 7px;
          border-bottom: 1px solid #9aa0a8;
          background: linear-gradient(#fff, #eef1f8 32%, #d5dbec 34%, #e2e7f4 80%, #f4f4f8);
        }
        nav { display: flex; flex: 1; gap: 15px; margin-left: 7px; }
        button {
          padding: 1px 0 0;
          border: 0;
          background: none;
          color: #111;
          font: 14px/20px "Open Sans", "Noto Sans", sans-serif;
        }
      </style>
      ${icon('chart', 19)}
      <nav>${items.map(item => `<button>${item}</button>`).join('')}</nav>
      <mdi-buttons></mdi-buttons>`;
  }
}

class ToolBar extends HTMLElement {
  constructor() {
    super();
    const group = names => names.map(name => {
      if (name === '/') return '<i class="sep"></i>';
      const cls = name === 'pointer' ? ' class="on"' : '';
      return `<button${cls} aria-label="${name}">${icon(name)}</button>`;
    }).join('');
    this.attachShadow({mode: 'open'}).innerHTML = `
      <style>
        :host {
          display: flex;
          align-items: center;
          box-sizing: border-box;
          height: 32px;
          border-top: 2px solid #fbfbfb;
          border-bottom: 2px solid #808080;
          background: #f0f0f0;
        }
        div { display: flex; align-items: center; }
        .grip {
          width: 3px;
          height: 25px;
          margin: 0 2px 0 25px;
          background: radial-gradient(#999 1px, transparent 2px) 0 0 / 3px 4px;
        }
        .middle { margin-left: -7px; }
        .drawing { margin-left: 2px; }
        .sep { width: 1px; height: 22px; margin: 0 3px 0 4px; background: #999; }
        button {
          display: flex;
          align-items: center;
          justify-content: center;
          box-sizing: border-box;
          width: 23px;
          height: 24px;
          padding: 0;
          border: 0;
          background: none;
          font: 12px/16px "Liberation Sans", Arial, sans-serif;
        }
        .on { border: 1px solid #fff; border-top-color: #888; border-left-color: #888; background: #f8f8f8; }
        .box { position: relative; }
        select {
          appearance: none;
          width: 136px;
          height: 22px;
          padding: 0 3px;
          border: 1px solid #e3e9ef;
          border-radius: 0;
          background: #fff;
          color: #000;
          font: 12px "Liberation Sans", Arial, sans-serif;
        }
        .box svg { position: absolute; right: 4px; top: 9px; pointer-events: none; }
        .go { width: 20px; margin-right: 6px; }
        svg { shape-rendering: crispEdges; }
      </style>
      <div>
        <i class="grip"></i>
        ${group(['page', 'open', 'saveAll', 'mail', 'folder', '/', 'pageSetup', 'print', '/', 'insert', 'insertColor', 'lock', 'satellite', 'cubes', '/'])}
        <div class="box">
          <select aria-label="Symbol"><option>r</option></select>
          <svg width="9" height="5"><path d="M0 0h9L4.500 5z"/></svg>
        </div>
        <button class="go" aria-label="Go"><svg width="5" height="9"><path d="M0 0v9l5-4.500z"/></svg></button>
        ${group(['find'])}
      </div>
      <div class="middle">
        <i class="grip"></i>
        ${group(['account', 'trackOff', 'quote', '/', 'analysis', 'upDown', 'windows', '/', 'handPage', 'handBox', '/', 'calendar', 'clockBars', 'blackBars', 'ohlc', 'candle', '/', 'narrow', 'widen', '/', 'zoomIn', 'zoomOut', '/', 'pointer', 'chartText', '/', 'tools', '/', 'addReport', '/', 'note'])}
      </div>
      <div class="drawing">
        <i class="grip"></i>
        ${group(['pitchfork', 'vLines', 'hLines', 'calc', 'arcs', 'fanDots', 'retrace', 'timeZones', 'fan', 'hArrow', 'parallel', 'cycle', 'pencil', '/', 'curve', 'downArrow', 'upArrow', 'ellipse', 'rect'])}
        <button>abc</button>
      </div>`;
  }
}

class ValueAxis extends HTMLElement {
  constructor() {
    super();
    this.attachShadow({mode: 'open'});
  }

  set panel(panel) {
    const left = this.hasAttribute('left');
    const height = panel.bottom - panel.top;
    const at = y => `top:${(y - panel.top) / height * 100}%`;
    const marks = panel.ticks.map(([y, full, short]) =>
      `<i style="${at(y)}"></i>` + (full ? `<span style="${at(y)}">${left && short ? short : full}</span>` : ''));
    const badges = left ? [] : panel.badges.map(([text, y, color, extra]) =>
      `<b style="${at(y)};background:${color};${extra || ''}">${text}</b>`);
    this.shadowRoot.innerHTML = `
      <style>
        :host {
          display: block;
          position: relative;
          overflow: hidden;
          color: #fff;
          font: 20px/24px "Liberation Sans", Arial, sans-serif;
          border-left: 1px solid #fff;
        }
        :host([left]) { border-left: 0; border-right: 1px solid #fff; }
        :host([ruled]) { box-shadow: inset 0 1px #fff; }
        i { position: absolute; left: 0; width: 7px; height: 1px; background: #fff; }
        span { position: absolute; left: 7px; margin-top: -11px; white-space: nowrap; }
        :host([left]) i { left: auto; right: 0; }
        :host([left]) span { left: auto; right: 10px; }
        b {
          position: absolute;
          left: 0;
          right: 0;
          padding-left: 7px;
          color: #000;
          font-weight: normal;
          line-height: 23px;
        }
      </style>
      ${marks.join('')}${badges.join('')}`;
  }
}

class ChartPanel extends HTMLElement {
  constructor() {
    super();
    this.attachShadow({mode: 'open'});
  }

  set panel(panel) {
    const {top, bottom, gridTop} = panel;
    const width = X1 - X0;
    const height = bottom - top;
    const grid = MONTHS.map(([x]) => `M${x}.5 ${gridTop}V${bottom - 1}`).join('') +
      panel.ticks.map(([y]) => `M${X0} ${y}.5H${X1 - 1}`).join('');
    const tags = (panel.tags ? panel.tags() : []).map(([x, y, text]) =>
      `<span style="left:${(x - X0) / width * 100}%;top:${(y - top) / height * 100}%">${text}</span>`).join('');
    this.style.flex = `${height} 1 0`;
    this.shadowRoot.innerHTML = `
      <style>
        :host {
          display: grid;
          grid-template-columns: 79px minmax(0, 1fr) 78px;
          min-height: 0;
          font: 16px/18px "Liberation Sans", Arial, sans-serif;
        }
        .plot { position: relative; overflow: hidden; }
        header {
          position: absolute;
          z-index: 1;
          left: 1px;
          top: 2px;
          display: grid;
          grid-template-columns: ${panel.columns};
          white-space: nowrap;
        }
        svg {
          position: absolute;
          width: 100%;
          height: 100%;
          fill: none;
          shape-rendering: crispEdges;
        }
        span { position: absolute; margin: -8px 0 0 -8px; width: 16px; color: #fff; text-align: center; }
        header b { font-weight: normal; }
      </style>
      <value-axis left></value-axis>
      <div class="plot">
        <header>${panel.header.map(([text, color]) => `<b style="color:${color}">${text}</b>`).join('')}</header>
        <svg viewBox="${X0} ${top} ${width} ${height}" preserveAspectRatio="none">
          <path d="${grid}" stroke="#181818"/>
          ${panel.draw()}
        </svg>
        ${tags}
      </div>
      <value-axis></value-axis>`;
    this.shadowRoot.querySelectorAll('value-axis').forEach(axis => {
      axis.toggleAttribute('ruled', top > 90);
      axis.panel = panel;
    });
  }
}

class TimeAxis extends HTMLElement {
  constructor() {
    super();
    const width = X1 - X0;
    let ticks = MONTHS.map(([x]) => `M${x}.5 0v10`).join('');
    for (let x = 91; x < X1; x += 15.05) ticks += `M${Math.round(x)}.5 0v5`;
    this.attachShadow({mode: 'open'}).innerHTML = `
      <style>
        :host {
          display: block;
          flex: 28 1 0;
          position: relative;
          box-shadow: inset 0 1px #fff, inset 0 -1px #fff;
          font: 20px/22px "Liberation Sans", Arial, sans-serif;
          color: #fff;
        }
        .plot { position: relative; height: 100%; margin: 0 78px 0 79px; }
        svg { position: absolute; width: 100%; height: 10px; stroke: #fff; shape-rendering: crispEdges; }
        span { position: absolute; top: 6px; }
      </style>
      <div class="plot">
        <svg viewBox="${X0} 0 ${width} 10" preserveAspectRatio="none"><path d="${ticks}"/></svg>
        ${MONTHS.map(([x, text]) => `<span style="left:${(x - X0) / width * 100}%">${text}</span>`).join('')}
      </div>`;
  }
}

class ChartView extends HTMLElement {
  constructor() {
    super();
    this.attachShadow({mode: 'open'}).innerHTML = `
      <style>
        :host {
          display: flex;
          flex-direction: column;
          position: relative;
          min-height: 0;
          overflow: hidden;
          border-left: 2px solid #808080;
          border-right: 2px solid #e8e8e8;
          background: #000;
        }
        mdi-buttons { position: absolute; z-index: 2; right: -10px; top: 6px; border-top: 1px solid #fff; }
      </style>
      <chart-panel></chart-panel>
      <chart-panel></chart-panel>
      <chart-panel></chart-panel>
      <time-axis></time-axis>
      <mdi-buttons></mdi-buttons>`;
    this.shadowRoot.querySelectorAll('chart-panel').forEach((el, i) => {
      el.panel = PANELS[i];
    });
  }
}

class ScrollStrip extends HTMLElement {
  constructor() {
    super();
    this.attachShadow({mode: 'open'}).innerHTML = `
      <style>
        :host {
          display: flex;
          align-items: center;
          height: 23px;
          padding-right: 4px;
          border-left: 2px solid #808080;
          box-sizing: border-box;
          background: #ececec;
        }
        button {
          display: flex;
          align-items: center;
          justify-content: center;
          width: 18px;
          height: 19px;
          padding: 0;
          border: 0;
          background: none;
        }
        .thumb {
          margin: 0 3px 0 auto;
          border: 1px solid #8a8a8a;
          border-radius: 2px;
          background: linear-gradient(#fafafa, #d4d4d4);
        }
      </style>
      <button aria-label="Scroll left"><svg width="5" height="9"><path d="M5 0v9L0 4.500z" fill="#333"/></svg></button>
      <button class="thumb" aria-label="Scroll position"><svg width="10" height="8"><path d="M1 0v8M5 0v8M9 0v8" stroke="#555"/></svg></button>
      <button aria-label="Scroll right"><svg width="5" height="9"><path d="M0 0v9l5-4.500z" fill="#333"/></svg></button>`;
  }
}

class SheetTabs extends HTMLElement {
  constructor() {
    super();
    const tabs = [
      ['STOX_TF60', 91], ['STOX_TF120', 94], ['STOX TF240', 92], ['STOX _100', 84], ['STOX_TF30', 88],
      ['FIB_TF60', 75], ['FIB_TF120', 82], ['FIB TF240', 77], ['FIB_100', 70], ['FIB_TF30', 74],
      ['FIB Frame bassi', 113], ['STOXX frame bassi', 129], ['No PREZZI', 83]
    ];
    const active = 8;
    const edge = path => `<svg width="8" height="16"><path d="${path}"/></svg>`;
    const nav = ['M2 0v8M8 0v8L4 4z', 'M7 0v8L3 4z', 'M3 0v8l4-4z', 'M8 0v8M2 0v8l4-4z'];
    const names = ['First', 'Previous', 'Next', 'Last'];
    this.attachShadow({mode: 'open'}).innerHTML = `
      <style>
        :host {
          display: flex;
          height: 18px;
          box-sizing: border-box;
          border-top: 1px solid #000;
          border-bottom: 1px solid #808890;
          background: #f0f0f0;
        }
        button {
          padding: 0;
          border: 0;
          background: none;
          color: #000;
          font: 12px/16px "Liberation Sans", Arial, sans-serif;
          white-space: nowrap;
        }
        .nav { width: 17px; border: 1px solid #777; border-top-color: #fff; border-left-color: #fff; }
        .nav svg { display: block; margin: auto; fill: #555; stroke: #555; }
        .tab { display: flex; flex: none; }
        .tab button { flex: 1; height: 16px; padding-right: 6px; border-bottom: 1px solid #000; }
        .tab svg { flex: none; fill: none; stroke: #000; }
        .active { background: #fff; }
        .active button { font-weight: bold; }
      </style>
      ${nav.map((d, i) => `<button class="nav" aria-label="${names[i]}"><svg width="10" height="8"><path d="${d}"/></svg></button>`).join('')}
      ${tabs.map(([text, width], i) => `
        <div class="tab${i === active ? ' active' : ''}" style="width:${width}px">
          ${edge(i === active + 1 ? 'M6 0L0 16M3 8l3 8' : i ? 'M0 0l6 16M1 16l2-8' : 'M0 0l6 16')}
          <button>${text}</button>
        </div>`).join('')}
      <div class="tab">${edge('M6 0L0 16')}</div>`;
  }
}

class StatusBar extends HTMLElement {
  constructor() {
    super();
    const fields = [
      ['Acct:', 52], ['Open Psns:', 91], ['DT BP:', 63], ['Purch Pwr:', 87], ['Closed P/L:', 93], ['RT TE:', 60],
      ['Open P/L:', 84], ['ORDER BAR', 88, 'green'], ['MACROS', 69, 'green'], ['', 18, 'led'], ['06/12/2022 09:40', 124]
    ];
    this.attachShadow({mode: 'open'}).innerHTML = `
      <style>
        :host {
          display: flex;
          height: 21px;
          box-sizing: border-box;
          border-top: 1px solid #fff;
          border-bottom: 2px solid #6d7f96;
          background: #f0eded;
          color: #111;
          font: 14px/20px "Open Sans", "Noto Sans", sans-serif;
          white-space: nowrap;
        }
        p { flex: 1; margin: 0 0 0 2px; }
        span { box-sizing: border-box; padding-left: 4px; border-left: 1px solid #c9c6c6; }
        span:first-of-type { border-color: transparent; }
        .green { color: #128012; }
        .led { padding-left: 2px; }
        .led svg { display: block; margin-top: 2px; }
      </style>
      <p>For Help, press F1</p>
      ${fields.map(([text, width, cls]) => `<span class="${cls || ''}" style="width:${width}px">${
        cls === 'led' ? '<svg width="12" height="12"><circle cx="6" cy="6" r="5" fill="#c00" stroke="#300"/><circle cx="5" cy="4" r="2" fill="#f88"/></svg>' : text}</span>`).join('')}`;
  }
}

class TradeWindow extends HTMLElement {
  constructor() {
    super();
    this.attachShadow({mode: 'open'}).innerHTML = `
      <style>
        :host {
          display: flex;
          flex-direction: column;
          height: 100vh;
          overflow: hidden;
        }
        chart-view { flex: 1; }
        title-bar, menu-bar, tool-bar, scroll-strip, sheet-tabs, status-bar { flex: none; }
      </style>
      <title-bar>TradeStation 8.1 - STOX_FIB - FIB_100 - [Chart Analysis - GS:FTSEMIB  Daily  [MCEDB] SPMIB FUTURES]</title-bar>
      <menu-bar></menu-bar>
      <tool-bar></tool-bar>
      <chart-view></chart-view>
      <scroll-strip></scroll-strip>
      <sheet-tabs></sheet-tabs>
      <status-bar></status-bar>`;
  }
}

customElements.define('title-bar', TitleBar);
customElements.define('mdi-buttons', MdiButtons);
customElements.define('menu-bar', MenuBar);
customElements.define('tool-bar', ToolBar);
customElements.define('value-axis', ValueAxis);
customElements.define('chart-panel', ChartPanel);
customElements.define('time-axis', TimeAxis);
customElements.define('chart-view', ChartView);
customElements.define('scroll-strip', ScrollStrip);
customElements.define('sheet-tabs', SheetTabs);
customElements.define('status-bar', StatusBar);
customElements.define('trade-window', TradeWindow);
</script>
</body>
</html>
